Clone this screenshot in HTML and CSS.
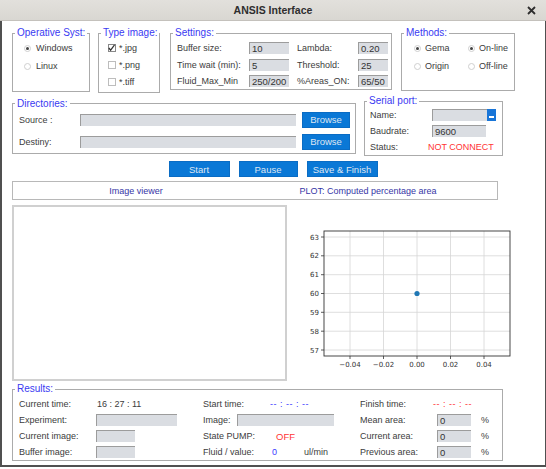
FILE: index.html
```html
<!DOCTYPE html>
<html lang="en">
<head>
<meta charset="UTF-8">
<meta name="viewport" content="width=device-width, initial-scale=1.0">
<title>ANSIS Interface</title>
<link rel="stylesheet" href="styles.css">
</head>
<body>
<div class="titlebar">
  <span></span>
  <span class="title">ANSIS Interface</span>
  <svg class="close" width="9" height="9" viewBox="0 0 9 9">
    <path d="M1 1 L8 8 M8 1 L1 8" stroke="#2e2e2e" stroke-width="1.8"/>
  </svg>
</div>

<div class="content">
  <div class="row top-row">
    <fieldset class="group os">
      <legend>Operative Syst:</legend>
      <div class="inner">
        <div class="opt"><span class="radio on"></span>Windows</div>
        <div class="opt"><span class="radio"></span>Linux</div>
      </div>
    </fieldset>

    <fieldset class="group types">
      <legend>Type image:</legend>
      <div class="inner">
        <div class="opt"><span class="check on"><svg width="8" height="8" viewBox="0 0 8 8"><path d="M1 4 L3 6.5 L7.5 0.5" fill="none" stroke="#333" stroke-width="1.4"/></svg></span>*.jpg</div>
        <div class="opt"><span class="check"></span>*.png</div>
        <div class="opt"><span class="check"></span>*.tiff</div>
      </div>
    </fieldset>

    <fieldset class="group settings">
      <legend>Settings:</legend>
      <div class="inner settings-grid">
        <span>Buffer size:</span><span class="entry">10</span>
        <span>Lambda:</span><span class="entry">0.20</span>
        <span>Time wait (min):</span><span class="entry">5</span>
        <span>Threshold:</span><span class="entry">25</span>
        <span>Fluid_Max_Min</span><span class="entry">250/200</span>
        <span>%Areas_ON:</span><span class="entry">65/50</span>
      </div>
    </fieldset>

    <fieldset class="group methods">
      <legend>Methods:</legend>
      <div class="inner methods-grid">
        <div class="opt"><span class="radio on"></span>Gema</div>
        <div class="opt"><span class="radio on"></span>On-line</div>
        <div class="opt"><span class="radio"></span>Origin</div>
        <div class="opt"><span class="radio"></span>Off-line</div>
      </div>
    </fieldset>
  </div>

  <div class="row mid-row">
    <fieldset class="group dirs">
      <legend>Directories:</legend>
      <div class="inner dirs-grid">
        <span>Source :</span><span class="entry"></span><button class="btn">Browse</button>
        <span>Destiny:</span><span class="entry"></span><button class="btn">Browse</button>
      </div>
    </fieldset>

    <fieldset class="group serial">
      <legend>Serial port:</legend>
      <div class="inner serial-grid">
        <span>Name:</span>
        <span class="entry combo"><span class="combo-btn"></span></span>
        <span>Baudrate:</span><span class="entry baud">9600</span>
        <span>Status:</span><span class="status">NOT CONNECT</span>
      </div>
    </fieldset>
  </div>

  <div class="actions">
    <button class="btn start">Start</button>
    <button class="btn pause">Pause</button>
    <button class="btn save">Save &amp; Finish</button>
  </div>

  <div class="header-box">
    <span class="head-left">Image viewer</span>
    <span class="head-right">PLOT: Computed percentage area</span>
  </div>

  <div class="views">
    <div class="viewer"></div>
    <svg class="plot" width="250" height="176" viewBox="0 0 250 176">
      <g stroke="#d6d6d6" stroke-width="0.8">
        <line x1="60" y1="26" x2="60" y2="151"/>
        <line x1="93.5" y1="26" x2="93.5" y2="151"/>
        <line x1="127" y1="26" x2="127" y2="151"/>
        <line x1="160.5" y1="26" x2="160.5" y2="151"/>
        <line x1="194" y1="26" x2="194" y2="151"/>
        <line x1="34" y1="32" x2="220" y2="32"/>
        <line x1="34" y1="50.8" x2="220" y2="50.8"/>
        <line x1="34" y1="69.7" x2="220" y2="69.7"/>
        <line x1="34" y1="88.5" x2="220" y2="88.5"/>
        <line x1="34" y1="107.3" x2="220" y2="107.3"/>
        <line x1="34" y1="126.2" x2="220" y2="126.2"/>
        <line x1="34" y1="145" x2="220" y2="145"/>
      </g>
      <g stroke="#333" stroke-width="0.8">
        <line x1="31" y1="32" x2="34" y2="32"/>
        <line x1="31" y1="50.8" x2="34" y2="50.8"/>
        <line x1="31" y1="69.7" x2="34" y2="69.7"/>
        <line x1="31" y1="88.5" x2="34" y2="88.5"/>
        <line x1="31" y1="107.3" x2="34" y2="107.3"/>
        <line x1="31" y1="126.2" x2="34" y2="126.2"/>
        <line x1="31" y1="145" x2="34" y2="145"/>
        <line x1="60" y1="151" x2="60" y2="154"/>
        <line x1="93.5" y1="151" x2="93.5" y2="154"/>
        <line x1="127" y1="151" x2="127" y2="154"/>
        <line x1="160.5" y1="151" x2="160.5" y2="154"/>
        <line x1="194" y1="151" x2="194" y2="154"/>
      </g>
      <rect x="34" y="26" width="186" height="125" fill="none" stroke="#333" stroke-width="0.9"/>
      <circle cx="127" cy="88.5" r="2.6" fill="#1f77b4"/>
      <g class="ticks" text-anchor="end">
        <text x="29" y="34.5">63</text>
        <text x="29" y="53.3">62</text>
        <text x="29" y="72.2">61</text>
        <text x="29" y="91">60</text>
        <text x="29" y="109.8">59</text>
        <text x="29" y="128.7">58</text>
        <text x="29" y="147.5">57</text>
      </g>
      <g class="ticks" text-anchor="middle">
        <text x="60" y="162">&#8722;0.04</text>
        <text x="93.5" y="162">&#8722;0.02</text>
        <text x="127" y="162">0.00</text>
        <text x="160.5" y="162">0.02</text>
        <text x="194" y="162">0.04</text>
      </g>
    </svg>
  </div>

  <fieldset class="group results">
    <legend>Results:</legend>
    <div class="inner results-grid">
      <span>Current time:</span><span class="clock">16 : 27 : 11</span>
      <span class="span2">Start time:</span><span class="blue dash">-- : -- : --</span>
      <span>Finish time:</span><span class="red dash finish">-- : -- : --</span><span></span>

      <span>Experiment:</span><span class="entry exp"></span>
      <span>Image:</span><span class="entry img span2"></span>
      <span>Mean area:</span><span class="entry pct">0</span><span>%</span>

      <span>Current image:</span><span class="entry small"></span>
      <span class="span2">State PUMP:</span><span class="red off">OFF</span>
      <span>Current area:</span><span class="entry pct">0</span><span>%</span>

      <span>Buffer image:</span><span class="entry small"></span>
      <span class="span2">Fluid / value:</span><span class="fluid"><span class="blue">0</span><span class="unit">ul/min</span></span>
      <span>Previous area:</span><span class="entry pct">0</span><span>%</span>
    </div>
  </fieldset>
</div>
</body>
</html>
```

FILE: styles.css
```css
body {
  margin: 0;
  background-color: #fff;
  font-family: "Liberation Sans", Arial, sans-serif;
  font-size: 9px;
  color: #3c3c3c;
}
.titlebar {
  height: 21px;
  display: grid;
  grid-template-columns: 1fr auto 1fr;
  align-items: center;
  background: linear-gradient(#e2e0dc, #d9d7d2);
  border-bottom: 1px solid #c4c1bc;
  box-sizing: border-box;
}
.title {
  font-size: 10.5px;
  font-weight: bold;
  color: #2e2e2e;
}
.close {
  justify-self: end;
  margin-right: 10px;
}
.content {
  height: 446px;
  box-sizing: border-box;
  border-left: 2px solid #505050;
  border-right: 1px solid #505050;
  border-bottom: 2px solid #505050;
  padding: 0 0 0 10px;
}
.row {
  display: flex;
  align-items: flex-start;
}
.top-row {
  padding-top: 6px;
}
.mid-row {
  margin-top: 2px;
  align-items: center;
}

/* group boxes */
.group {
  margin: 0;
  padding: 0;
  border: 1px solid #ababab;
  box-sizing: border-box;
  min-width: 0;
}
.group legend {
  margin-left: 2px;
  padding: 0 2px;
  font-size: 10px;
  line-height: 12px;
  color: #3a3af2;
  white-space: nowrap;
}
.opt {
  display: flex;
  align-items: center;
  height: 16px;
  white-space: nowrap;
}
.radio {
  width: 5px;
  height: 5px;
  border: 1px solid #cfcfcf;
  border-radius: 50%;
  margin-right: 5px;
  position: relative;
}
.radio.on::after {
  content: "";
  position: absolute;
  left: 1px;
  top: 1px;
  width: 3px;
  height: 3px;
  border-radius: 50%;
  background-color: #444;
}
.check {
  width: 8px;
  height: 8px;
  border: 1px solid #bdbdbd;
  box-sizing: border-box;
  margin-right: 3px;
  display: flex;
}
.check.on {
  border-color: #888;
}
.check svg {
  margin: -1px 0 0 -1px;
}

.os {
  width: 78px;
}
.os .inner {
  padding: 1px 0 17px 11px;
}
.os .opt + .opt {
  margin-top: 2px;
}
.types {
  width: 62px;
  margin-left: 8px;
}
.types .inner {
  padding: 0 0 2px 9px;
}
.types .opt {
  height: 17px;
}
.settings {
  width: 222px;
  margin-left: 10px;
}
.settings-grid {
  padding: 1px 0 0 6px;
  display: grid;
  grid-template-columns: 72px 40px 69px 30px;
  grid-auto-rows: 16px;
  row-gap: 0.5px;
  align-items: center;
  white-space: nowrap;
}
.settings-grid span:nth-child(3),
.settings-grid span:nth-child(7),
.settings-grid span:nth-child(11) {
  margin-left: 8px;
}
.methods {
  width: 114px;
  margin-left: 9px;
}
.methods-grid {
  padding: 1px 0 16px 12px;
  display: grid;
  grid-template-columns: 54px auto;
  row-gap: 2px;
}
.methods .radio {
  margin-right: 4px;
}

.entry {
  display: block;
  height: 12px;
  box-sizing: border-box;
  background-color: #dadde2;
  border-top: 1px solid #9c9c9c;
  border-left: 1px solid #9c9c9c;
  padding-left: 2px;
  line-height: 11px;
  font-size: 9.5px;
  color: #333;
}

.dirs {
  width: 344px;
}
.dirs-grid {
  padding: 2px 4px 3px 6px;
  display: grid;
  grid-template-columns: 55px 216px 48px;
  grid-auto-rows: 16px;
  row-gap: 6px;
  column-gap: 6px;
  align-items: center;
}
.serial {
  width: 139px;
  margin-left: 8px;
}
.serial-grid {
  padding: 0 5px;
  display: grid;
  grid-template-columns: 62px 64px;
  grid-auto-rows: 16px;
  align-items: center;
}
.combo {
  position: relative;
}
.combo-btn {
  position: absolute;
  right: 0;
  top: -1px;
  width: 9px;
  height: 12px;
  background-color: #1875d8;
}
.combo-btn::after {
  content: "";
  position: absolute;
  left: 2px;
  top: 7px;
  width: 5px;
  height: 2px;
  background-color: #fff;
}
.baud {
  width: 54px;
}
.status {
  color: #ff3434;
  margin-left: -4px;
  white-space: nowrap;
}

.btn {
  height: 16px;
  padding: 0;
  border: 1px solid #0a6cc4;
  background-color: #0a78d6;
  color: #dfe6f2;
  font-family: "Liberation Sans", Arial, sans-serif;
  font-size: 9.5px;
}
.actions {
  display: flex;
  justify-content: center;
  gap: 9px;
  margin-top: 5px;
  padding-right: 11px;
}
.start { width: 61px; }
.pause { width: 59px; }
.save { width: 71px; }

.header-box {
  width: 486px;
  height: 19px;
  margin-top: 4px;
  box-sizing: border-box;
  border: 1px solid #b8b8b8;
  display: flex;
  align-items: center;
  color: #3636a6;
}
.head-left {
  width: 246px;
  text-align: center;
}
.head-right {
  width: 218px;
  text-align: center;
}

.views {
  display: flex;
  margin-top: 5px;
}
.viewer {
  width: 275px;
  height: 176px;
  box-sizing: border-box;
  border: 2px solid #d0d0d0;
}
.plot {
  margin-left: 3px;
}
.ticks {
  font-family: "DejaVu Sans", sans-serif;
  font-size: 7px;
  fill: #333;
}

.results {
  width: 491px;
  margin-top: 2px;
}
.results-grid {
  padding: 1px 0 0 6px;
  display: grid;
  grid-template-columns: 77px 107px 34px 33px 90px 77px 44px 12px;
  grid-auto-rows: 16px;
  align-items: center;
  white-space: nowrap;
}
.results-grid .span2 {
  grid-column: span 2;
}
.clock {
  padding-left: 1px;
}
.dash {
  letter-spacing: 0.5px;
}
.blue {
  color: #3a3aff;
}
.red {
  color: #ff3434;
}
.finish {
  margin-left: -4px;
}
.exp { width: 81px; }
.img { width: 97px; }
.small { width: 39px; }
.pct { width: 34px; }
.off {
  padding-left: 6px;
  font-size: 9.5px;
}
.fluid {
  padding-left: 2px;
}
.unit {
  margin-left: 27px;
}
```
